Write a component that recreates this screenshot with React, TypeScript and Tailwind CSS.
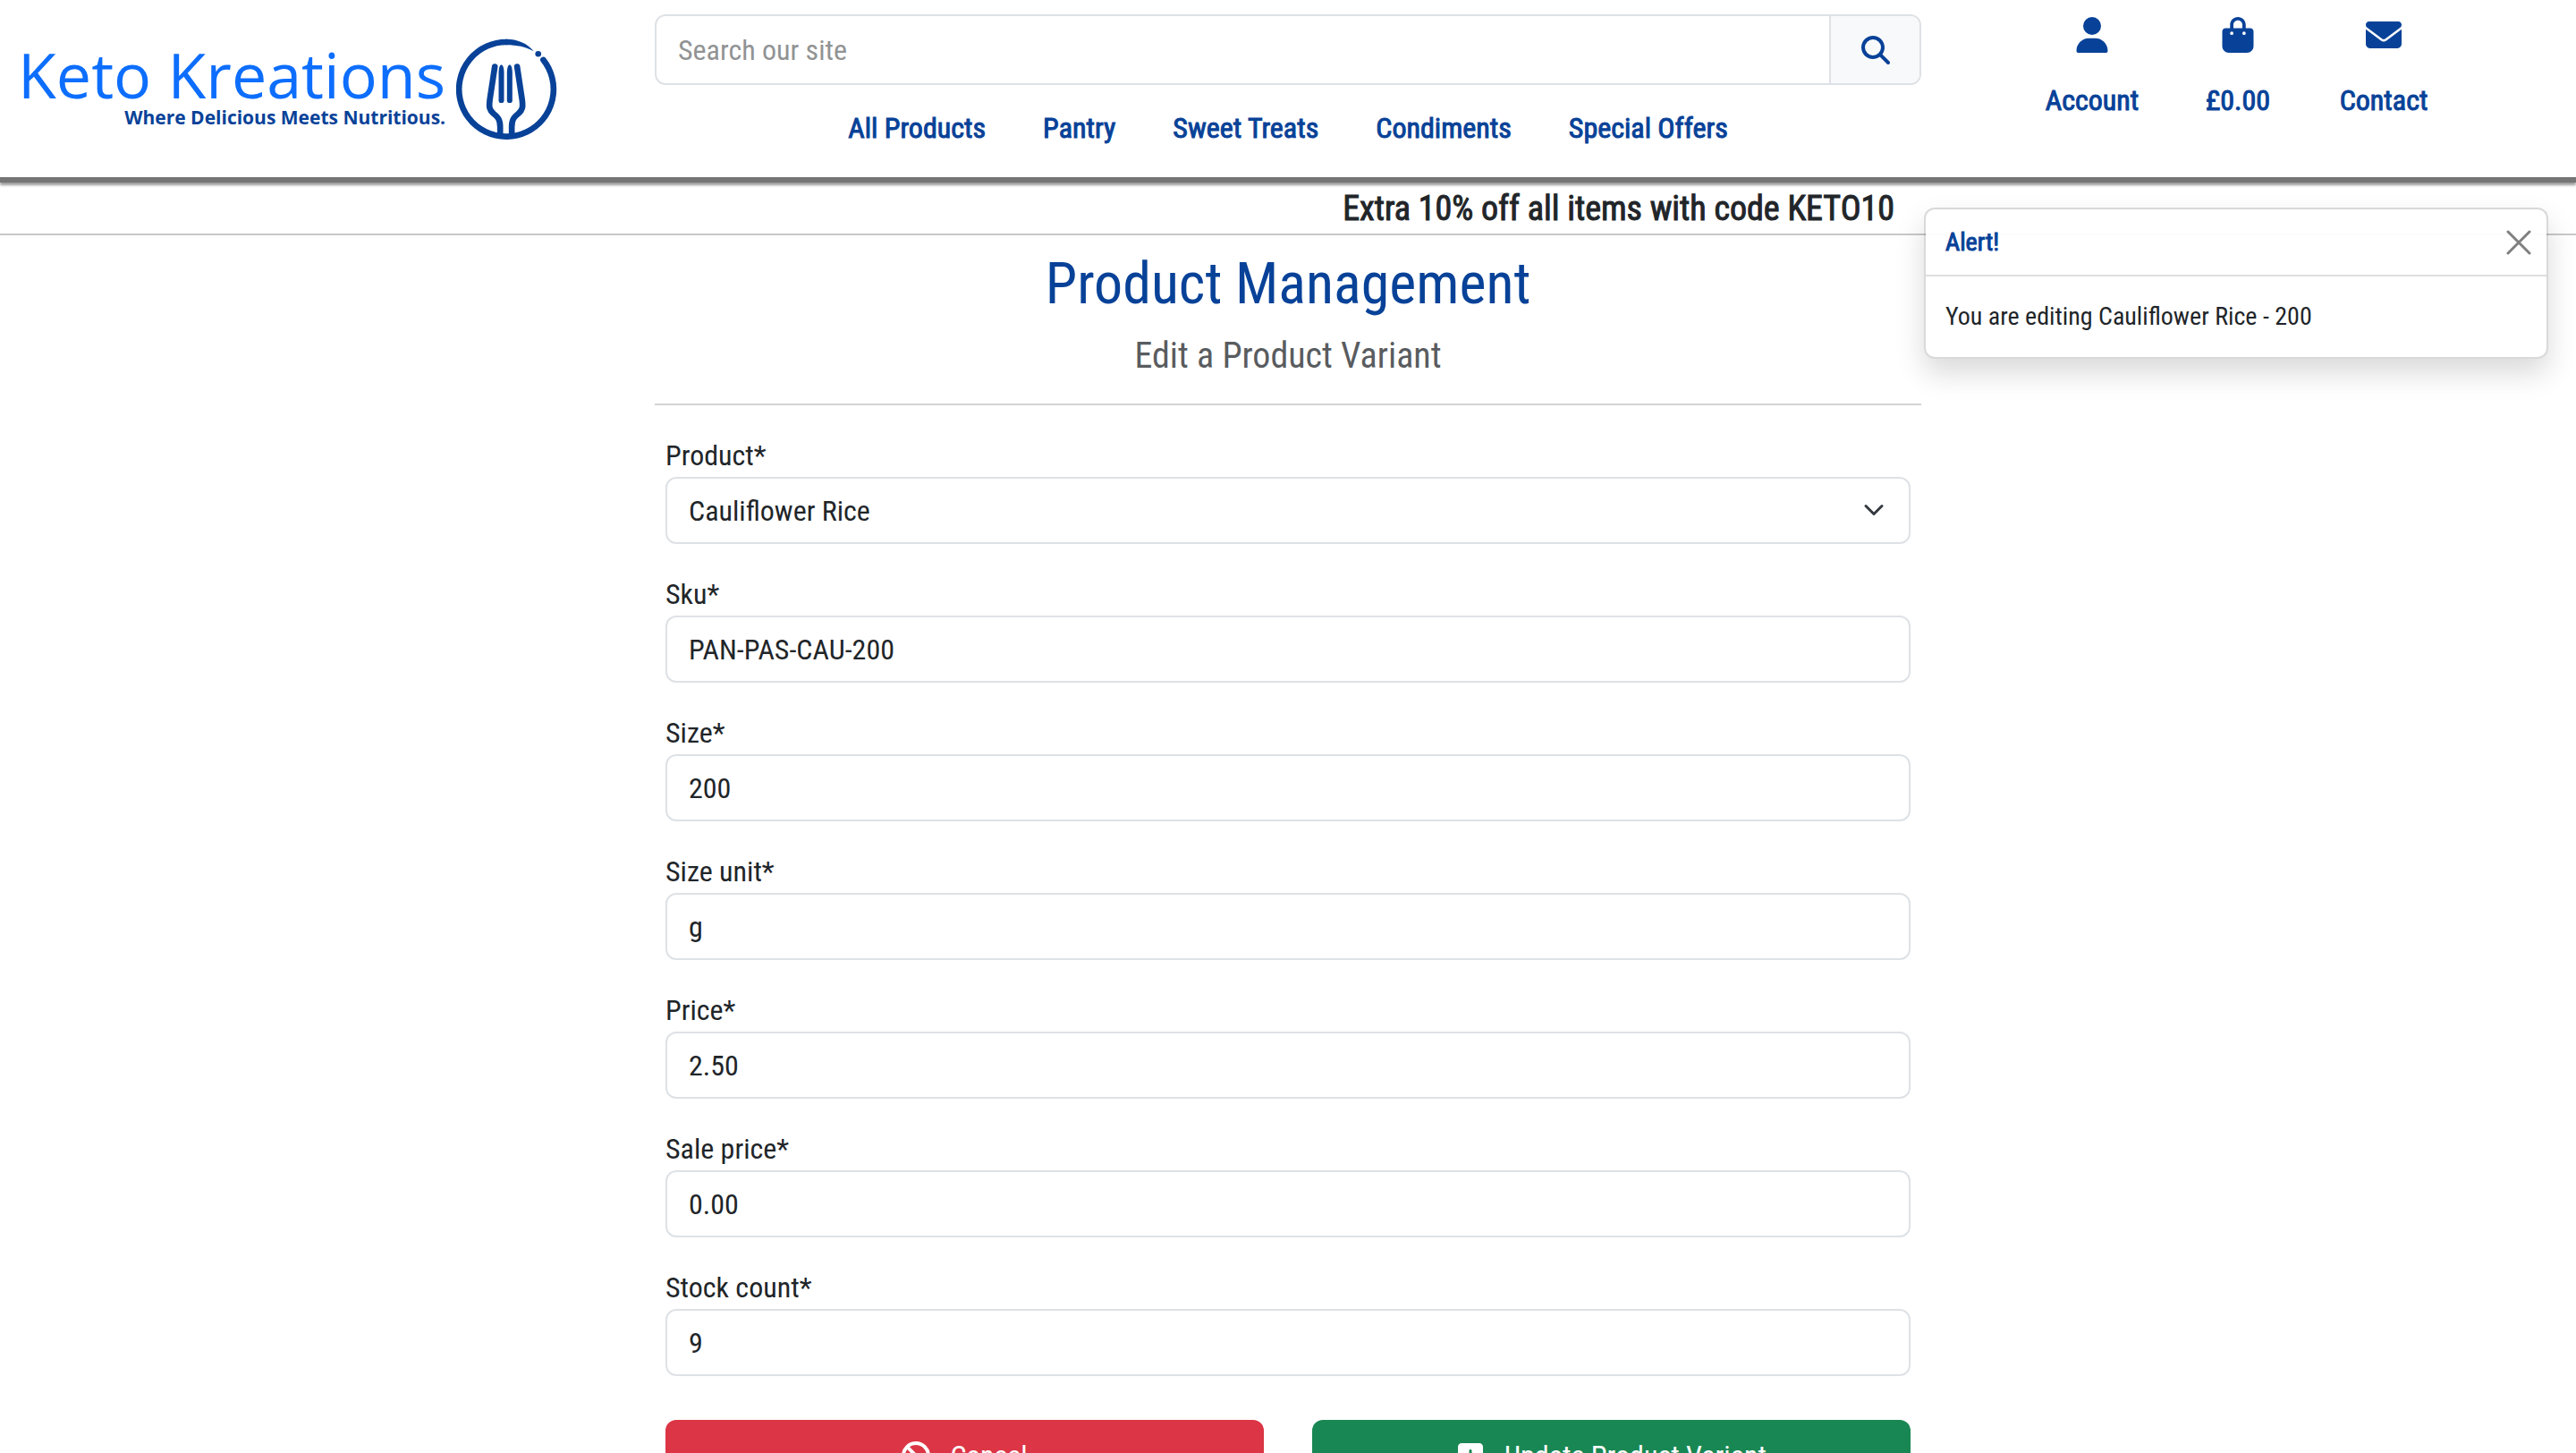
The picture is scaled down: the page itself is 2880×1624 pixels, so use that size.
import React from "react";
import {
  FaBagShopping,
  FaBan,
  FaEnvelope,
  FaMagnifyingGlass,
  FaSquarePlus,
  FaUser,
} from "react-icons/fa6";

const navLinks = ["All Products", "Pantry", "Sweet Treats", "Condiments", "Special Offers"];

const accountLinks = [
  { label: "Account", Icon: FaUser },
  { label: "£0.00", Icon: FaBagShopping },
  { label: "Contact", Icon: FaEnvelope },
];

const textFields = [
  { id: "sku", label: "Sku*", value: "PAN-PAS-CAU-200" },
  { id: "size", label: "Size*", value: "200" },
  { id: "size_unit", label: "Size unit*", value: "g" },
  { id: "price", label: "Price*", value: "2.50" },
  { id: "sale_price", label: "Sale price*", value: "0.00" },
  { id: "stock_count", label: "Stock count*", value: "9" },
];

function ForkLogo() {
  return (
    <svg viewBox="30 38 340 340" className="size-[113px] shrink-0" fill="none" stroke="#084298" strokeWidth="20" aria-hidden="true">
      <path d="M323 110A159 159 0 1 1 200 50" strokeLinecap="round" />
      <path d="M198 40C235 40 270 54 291 81C262 66 235 60 198 60Z" fill="#084298" stroke="none" />
      <circle cx="306" cy="90" r="10" fill="#084298" stroke="none" />
      <path d="M160 133L143 245C140 270 142 278 155 290C170 302 178 310 178 335V360" strokeLinecap="round" strokeLinejoin="round" />
      <path d="M235 133L252 245C255 270 253 278 240 290C225 302 217 310 217 335V360" strokeLinecap="round" strokeLinejoin="round" />
      <path d="M173 246V150C174 135 177 127 182 127C187 127 190 135 191 150V246A9 9 0 0 1 173 246Z" fill="#084298" stroke="none" />
      <path d="M201 246V150C202 135 205 127 210 127C215 127 218 135 219 150V246A9 9 0 0 1 201 246Z" fill="#084298" stroke="none" />
    </svg>
  );
}

function Header() {
  return (
    <header className="grid h-[198px] grid-cols-[1fr_2fr_1fr]">
      <a href="#" className="flex items-start gap-3 pt-[43px] pl-5 font-['Open_Sans',sans-serif]">
        <span className="flex flex-col items-end">
          <span className="text-[70px] leading-[80px] whitespace-nowrap text-[#0d6efd]">Keto Kreations</span>
          <span className="text-[21px] leading-4 font-bold whitespace-nowrap text-[#084298]">
            Where Delicious Meets Nutritious.
          </span>
        </span>
        <ForkLogo />
      </a>

      <div className="px-3 pt-4">
        <form className="flex h-[79px] overflow-hidden rounded-xl border-2 border-[#dee2e6]" onSubmit={(e) => e.preventDefault()}>
          <input
            type="search"
            aria-label="Search our site"
            placeholder="Search our site"
            className="min-w-0 flex-1 px-6 placeholder:text-[#919394] focus:outline-none"
          />
          <button type="submit" aria-label="Search" className="flex w-[101px] items-center justify-center border-l-2 border-[#dee2e6] bg-[#f8f9fa] text-[#084298]">
            <FaMagnifyingGlass className="size-8" />
          </button>
        </form>
        <nav className="flex justify-center gap-16 pt-6">
          {navLinks.map((link) => (
            <a key={link} href="#" className="whitespace-nowrap text-[#084298] [-webkit-text-stroke:1px_#084298]">
              {link}
            </a>
          ))}
        </nav>
      </div>

      <nav className="flex justify-center pt-[19px] pr-9" aria-label="Account">
        {accountLinks.map(({ label, Icon }) => (
          <a key={label} href="#" className="flex w-[163px] flex-col items-center gap-[29px] text-[#084298]">
            <Icon className="size-10" />
            <span className="[-webkit-text-stroke:1px_#084298]">{label}</span>
          </a>
        ))}
      </nav>
    </header>
  );
}

function Toast() {
  return (
    <div
      role="alert"
      className="absolute top-[232px] right-[31px] w-[698px] rounded-xl border-2 border-black/15 bg-white/95 bg-clip-padding text-[28px] leading-[42px] shadow-[0_16px_32px_rgba(0,0,0,0.15)]"
    >
      <div className="flex h-[75px] items-center justify-between border-b-2 border-[#dedede] pr-[17px] pl-[22px]">
        <strong className="font-normal text-[#084298] [-webkit-text-stroke:1px_#084298]">Alert!</strong>
        <button type="button" aria-label="Close" className="text-[#7f7f7f]">
          <svg viewBox="0 0 28 28" className="size-7" fill="none" stroke="currentColor" strokeWidth="3" strokeLinecap="round" aria-hidden="true">
            <path d="M2 2L26 26M26 2L2 26" />
          </svg>
        </button>
      </div>
      <p className="px-[22px] py-6">You are editing Cauliflower Rice - 200</p>
    </div>
  );
}

function ProductForm() {
  const control =
    "h-[75px] w-full appearance-none rounded-xl border-2 border-[#dee2e6] bg-white px-6 focus:outline-none";
  return (
    <form className="px-3 pt-8" onSubmit={(e) => e.preventDefault()}>
      <div className="mb-8">
        <label htmlFor="product" className="block">
          Product*
        </label>
        <div className="relative">
          <select id="product" className={control} defaultValue="Cauliflower Rice">
            <option>Cauliflower Rice</option>
          </select>
          <svg viewBox="0 0 16 16" className="pointer-events-none absolute top-[25px] right-[29px] size-6" fill="none" stroke="#343a40" strokeWidth="2" strokeLinecap="round" strokeLinejoin="round" aria-hidden="true">
            <path d="m2 5 6 6 6-6" />
          </svg>
        </div>
      </div>
      {textFields.map(({ id, label, value }) => (
        <div key={id} className="mb-8">
          <label htmlFor={id} className="block">
            {label}
          </label>
          <input id={id} type="text" defaultValue={value} className={control} />
        </div>
      ))}
      <div className="grid grid-cols-2 gap-[54px] pt-[17px] text-white">
        <button type="button" className="flex h-20 items-center justify-center gap-[22px] rounded-xl bg-[#dc3545]">
          <FaBan className="size-8" />
          Cancel
        </button>
        <button type="submit" className="flex h-20 items-center justify-center gap-[22px] rounded-xl bg-[#198754]">
          <FaSquarePlus className="size-8" />
          Update Product Variant
        </button>
      </div>
    </form>
  );
}

export default function App() {
  return (
    <div className="relative h-screen overflow-hidden bg-white font-['Roboto_Condensed','Liberation_Sans_Narrow',Roboto,sans-serif] text-[32px] leading-[48px] text-[#212529]">
      <Header />
      <div className="h-[6px] bg-[#757575] shadow-[0_3px_3px_rgba(0,0,0,0.4)]" />
      <div className="flex h-[59px] items-center border-b-2 border-[#c8c8c8]">
        <p className="w-full pr-[762px] text-right text-[38px] [-webkit-text-stroke:1px_#212529]">
          Extra 10% off all items with code KETO10
        </p>
      </div>
      <main className="mx-auto w-1/2 px-3">
        <div className="border-b-2 border-[#d2d3d4] pt-[17px] pb-[29px] text-center">
          <h1 className="text-[64px] leading-[76px] text-[#084298]">Product Management</h1>
          <h2 className="pt-[18px] text-[40px] text-[#595c5f]">Edit a Product Variant</h2>
        </div>
        <ProductForm />
      </main>
      <Toast />
    </div>
  );
}
